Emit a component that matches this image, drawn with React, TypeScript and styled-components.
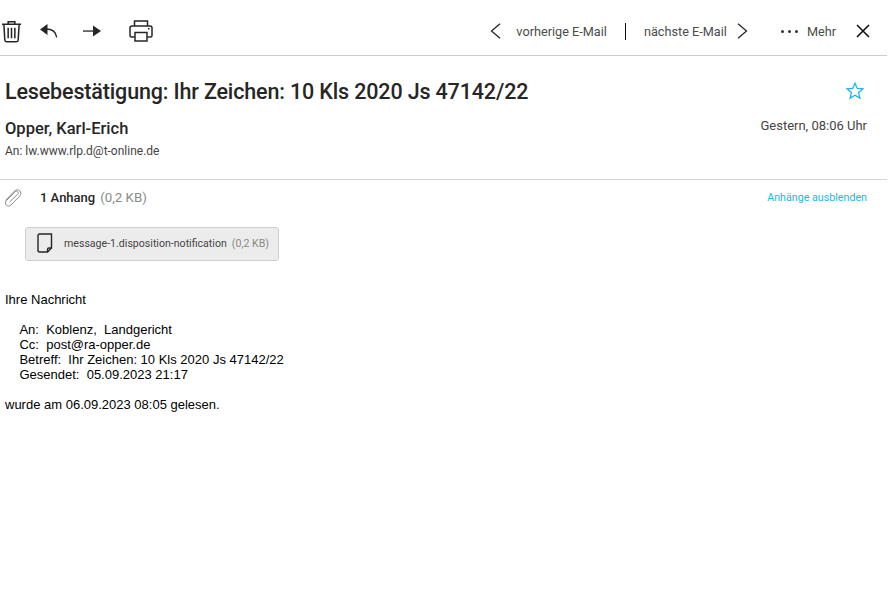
import React from 'react'
import styled, { createGlobalStyle } from 'styled-components'

const GlobalStyle = createGlobalStyle`
  html, body {
    margin: 0;
    background: #fff;
  }
`

const ink = '#262626'
const uiFont = `Roboto, 'Liberation Sans', sans-serif`

export default function App(): JSX.Element {
  return (
    <Page>
      <GlobalStyle />
      <Toolbar>
        <Actions>
          <IconSlot offset={1}>
            <svg width="21" height="24" viewBox="0 0 22 24" fill="none" stroke={ink} strokeWidth="1.600">
              <path d="M1 5h20M7.500 5V2.200h7V5" />
              <path d="M3 5l1 16.500c0 1 .8 1.700 1.800 1.700h10.400c1 0 1.800-.7 1.800-1.700L19 5" />
              <path d="M7.500 8.500v11M11 8.500v11M14.500 8.500v11" />
            </svg>
          </IconSlot>
          <IconSlot offset={18}>
            <svg width="18" height="16" viewBox="0 0 18 16" fill="none">
              <path d="M0 6.500L7.500 1v11z" fill={ink} />
              <path d="M6 6c6 0 10 2.500 10.700 8.500" stroke={ink} strokeWidth="1.400" />
            </svg>
          </IconSlot>
          <IconSlot offset={25}>
            <svg width="18" height="12" viewBox="0 0 18 12">
              <path d="M0 5.400h11v1.300H0z" fill={ink} />
              <path d="M10 .5L18 6l-8 5.500z" fill={ink} />
            </svg>
          </IconSlot>
          <IconSlot offset={28}>
            <svg width="24" height="22" viewBox="0 0 24 22" fill="none" stroke={ink} strokeWidth="1.500">
              <path d="M5.500 6V1h13v5" />
              <path d="M5.500 17H2.500C1.500 17 1 16.300 1 15.500V8c0-1.200.8-2 2-2h18c1.200 0 2 .8 2 2v7.500c0 .8-.5 1.500-1.500 1.500h-3" />
              <path d="M6 12.500h12V21H6z" />
              <path d="M19 8.800h1.500" />
            </svg>
          </IconSlot>
        </Actions>
        <Pager>
          <svg width="11" height="16" viewBox="0 0 11 16" fill="none" stroke={ink} strokeWidth="1.300">
            <path d="M10 .8L1.500 8l8.500 7.200" />
          </svg>
          <NavLabel>vorherige E-Mail</NavLabel>
          <Divider />
          <NavLabel>nächste E-Mail</NavLabel>
          <NextIcon width="11" height="16" viewBox="0 0 11 16" fill="none" stroke={ink} strokeWidth="1.300">
            <path d="M1 .8L9.500 8 1 15.200" />
          </NextIcon>
        </Pager>
        <More>
          <Dots>
            <Dot />
            <Dot />
            <Dot />
          </Dots>
          <MoreLabel>Mehr</MoreLabel>
        </More>
        <Close>
          <svg width="14" height="14" viewBox="0 0 14 14" stroke="#111" strokeWidth="1.600">
            <path d="M1 1l12 12M13 1L1 13" />
          </svg>
        </Close>
      </Toolbar>

      <Header>
        <TitleRow>
          <Title>Lesebestätigung: Ihr Zeichen: 10 Kls 2020 Js 47142/22</Title>
          <svg width="18" height="18" viewBox="0 0 18 18" fill="none" stroke="#1bb5ea" strokeWidth="1.300">
            <path d="M9 1.200l2.300 5.200 5.600.5-4.300 3.700 1.300 5.500L9 13.200l-4.900 2.900 1.300-5.500L1.100 6.900l5.600-.5z" />
          </svg>
        </TitleRow>
        <SenderRow>
          <Sender>Opper, Karl-Erich</Sender>
          <DateText>Gestern, 08:06 Uhr</DateText>
        </SenderRow>
        <Recipient>An: lw.www.rlp.d@t-online.de</Recipient>
      </Header>

      <Attachments>
        <AttachmentBar>
          <AttachmentSummary>
            <svg width="18" height="18" viewBox="0 0 18 18" fill="none" stroke="#8c8c8c" strokeWidth="1">
              <path d="M1.500 11.500L10.500 2c1.700-1.700 4-1.400 5.300-.1 1.300 1.300 1.400 3.500-.2 5.200L7 16c-1.400 1.400-3.400 1.400-4.700.2-1.200-1.200-1.300-3.100.1-4.500l8.600-8.900c.8-.8 2-.8 2.700-.1.700.7.700 1.800 0 2.600L5.600 13" />
            </svg>
            <AttachmentCount>
              <strong>1 Anhang</strong>
              <Size>(0,2 KB)</Size>
            </AttachmentCount>
          </AttachmentSummary>
          <HideLink>Anhänge ausblenden</HideLink>
        </AttachmentBar>
        <FileChip>
          <svg width="16" height="20" viewBox="0 0 16 20" fill="none" stroke={ink} strokeWidth="1.400">
            <path d="M2.500 1h12v14l-4 4h-8C1.500 19 1 18.500 1 17.500v-15C1 1.500 1.500 1 2.500 1z" />
            <path d="M14.500 15h-2.500c-1 0-1.500.5-1.500 1.500V19" />
          </svg>
          <FileName>message-1.disposition-notification</FileName>
          <FileSize>(0,2 KB)</FileSize>
        </FileChip>
      </Attachments>

      <Body>
        {`Ihre Nachricht

    An:  Koblenz,  Landgericht
    Cc:  post@ra-opper.de
    Betreff:  Ihr Zeichen: 10 Kls 2020 Js 47142/22
    Gesendet:  05.09.2023 21:17

wurde am 06.09.2023 08:05 gelesen.`}
      </Body>
    </Page>
  )
}

const Page = styled.div`
  width: 887px;
  height: 602px;
  overflow: hidden;
  color: ${ink};
  font-family: ${uiFont};
`

const Toolbar = styled.div`
  display: flex;
  align-items: center;
  box-sizing: border-box;
  height: 56px;
  padding: 7px 17px 0 0;
  border-bottom: 1px solid #ccc;
`

const Actions = styled.div`
  display: flex;
  align-items: center;
  margin-right: auto;
`

const IconSlot = styled.div<{ offset: number }>`
  display: flex;
  margin-left: ${(props) => props.offset}px;
`

const Pager = styled.div`
  display: flex;
  align-items: center;
`

const NavLabel = styled.span`
  color: #4b4b4b;
  font-size: 12.700px;
  margin-left: 15px;
`

const NextIcon = styled.svg`
  margin-left: 10px;
`

const Divider = styled.span`
  width: 1px;
  height: 17px;
  background: #111;
  margin: 0 3px 0 18px;
`

const More = styled.div`
  display: flex;
  align-items: center;
  margin-left: 33px;
`

const Dots = styled.div`
  display: flex;
  gap: 4px;
`

const Dot = styled.span`
  width: 3px;
  height: 3px;
  border-radius: 50%;
  background: #333;
`

const MoreLabel = styled.span`
  color: #4b4b4b;
  font-size: 12.700px;
  margin-left: 9px;
`

const Close = styled.div`
  display: flex;
  margin-left: 20px;
`

const Header = styled.div`
  box-sizing: border-box;
  height: 124px;
  padding: 0 20px 0 5px;
  border-bottom: 1px solid #d4d4d4;
`

const TitleRow = styled.div`
  display: flex;
  align-items: center;
  justify-content: space-between;
  height: 70px;
  padding-right: 3px;
`

const Title = styled.h1`
  margin: 0;
  font-size: 21.500px;
  font-weight: 500;
  letter-spacing: -0.15px;
  color: ${ink};
`

const SenderRow = styled.div`
  display: flex;
  justify-content: space-between;
  align-items: flex-start;
  margin-top: -7px;
`

const Sender = styled.div`
  font-size: 16.500px;
  font-weight: 500;
`

const DateText = styled.div`
  font-size: 13px;
  color: #444;
  margin-top: -1px;
`

const Recipient = styled.div`
  font-size: 12px;
  color: #444;
  margin-top: 6px;
`

const Attachments = styled.div`
  padding: 0 20px 0 4px;
`

const AttachmentBar = styled.div`
  display: flex;
  align-items: center;
  justify-content: space-between;
  height: 35px;
`

const AttachmentSummary = styled.div`
  display: flex;
  align-items: center;
  gap: 18px;
`

const AttachmentCount = styled.div`
  display: flex;
  gap: 5px;
  font-size: 13px;

  strong {
    font-weight: 500;
  }
`

const Size = styled.span`
  color: #8a8a8a;
  font-size: 13.300px;
`

const HideLink = styled.span`
  font-size: 10.700px;
  color: #1bb5ea;
`

const FileChip = styled.div`
  display: flex;
  align-items: center;
  box-sizing: border-box;
  width: 254px;
  height: 34px;
  margin: 12px 0 0 21px;
  padding: 0 0 2px 11px;
  background: #ececec;
  border: 1px solid #d0d0d0;
  border-radius: 3px;
`

const FileName = styled.span`
  font-size: 10.600px;
  color: #444;
  margin-left: 11px;
`

const FileSize = styled.span`
  font-size: 10.600px;
  color: #888;
  margin-left: 5px;
`

const Body = styled.pre`
  margin: 31px 0 0 5px;
  font-family: 'Liberation Sans', Arial, sans-serif;
  font-size: 13px;
  line-height: 15px;
  color: #000;
  white-space: pre-wrap;
`
